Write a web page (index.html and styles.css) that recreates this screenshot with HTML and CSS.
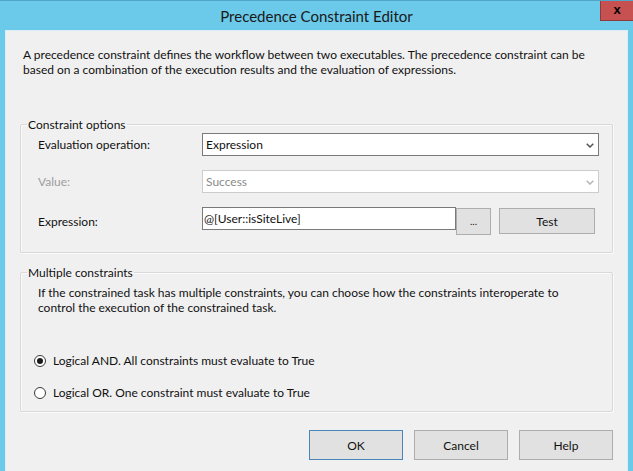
FILE: index.html
```html
<!DOCTYPE html>
<html lang="en">
<head>
<meta charset="utf-8">
<title>Precedence Constraint Editor</title>
<link rel="stylesheet" href="styles.css">
</head>
<body>
<div class="window">
  <div class="titlebar">
    <h1 class="title">Precedence Constraint Editor</h1>
    <button class="close" type="button">x</button>
  </div>
  <div class="content">
    <p class="desc">A precedence constraint defines the workflow between two executables. The precedence constraint can be<br>based on a combination of the execution results and the evaluation of expressions.</p>

    <fieldset class="group group-options">
      <legend>Constraint options</legend>
      <div class="form-grid">
        <label class="field-label">Evaluation operation:</label>
        <div class="combo">
          <span class="combo-text">Expression</span>
          <svg class="chevron" width="8" height="5" viewBox="0 0 8 5"><path d="M0.7 0.7 L4 4 L7.3 0.7" fill="none" stroke="#555" stroke-width="1.5"/></svg>
        </div>

        <label class="field-label field-label-disabled">Value:</label>
        <div class="combo combo-disabled">
          <span class="combo-text">Success</span>
          <svg class="chevron" width="8" height="5" viewBox="0 0 8 5"><path d="M0.7 0.7 L4 4 L7.3 0.7" fill="none" stroke="#b5b5b5" stroke-width="1.5"/></svg>
        </div>

        <label class="field-label">Expression:</label>
        <div class="expr-row">
          <div class="textbox">@[User::isSiteLive]</div>
          <button class="btn btn-ellipsis" type="button">...</button>
          <button class="btn btn-test" type="button">Test</button>
        </div>
      </div>
    </fieldset>

    <fieldset class="group group-multi">
      <legend>Multiple constraints</legend>
      <div class="multi-body">
        <p class="multi-text">If the constrained task has multiple constraints, you can choose how the constraints interoperate to<br>control the execution of the constrained task.</p>
        <div class="radio-list">
          <div class="radio"><span class="radio-dot checked"></span><span>Logical AND. All constraints must evaluate to True</span></div>
          <div class="radio"><span class="radio-dot"></span><span>Logical OR. One constraint must evaluate to True</span></div>
        </div>
      </div>
    </fieldset>

    <div class="actions">
      <button class="btn btn-dialog btn-default" type="button">OK</button>
      <button class="btn btn-dialog" type="button">Cancel</button>
      <button class="btn btn-dialog" type="button">Help</button>
    </div>
  </div>
</div>
</body>
</html>
```
FILE: styles.css
```css
* { box-sizing: border-box; }

body {
  margin: 0;
  font-family: Lato, "Liberation Sans", sans-serif;
  font-size: 12px;
  line-height: 15px;
  color: #111;
}

.window {
  width: 633px;
  height: 471px;
  background: #6bc9e9;
  border-top: 1px solid #4fa6c6;
  display: flex;
  flex-direction: column;
  overflow: hidden;
}

.titlebar {
  height: 29px;
  display: grid;
  grid-template-columns: 1fr auto 1fr;
  align-items: center;
}

.title {
  grid-column: 2;
  margin: 0;
  font-size: 15px;
  font-weight: normal;
  color: #1a1a1a;
  line-height: 18px;
}

.close {
  grid-column: 3;
  justify-self: end;
  align-self: start;
  margin-top: -1px;
  width: 33px;
  height: 21px;
  padding: 0 0 2px 0;
  background: #c75050;
  border: 1px solid #8e3b3b;
  border-top: 0;
  border-right: 0;
  font: bold 13px/1 "Liberation Sans", sans-serif;
  color: #000;
}

.content {
  flex: 1;
  margin: 0 5px;
  background: #f0f0f0;
  border: 1px solid #dbeef6;
  border-bottom: 0;
  padding: 16px 14px 0 14px;
  display: flex;
  flex-direction: column;
}

.desc {
  margin: 0 0 0 3px;
}

.group {
  margin: 0;
  padding: 0;
  border: 1px solid #d9d9d9;
  border-radius: 2px;
  box-shadow: inset 1px 1px 0 #fafafa, 1px 1px 0 #fafafa;
  min-width: 0;
}

.group legend {
  margin-left: 6px;
  padding: 0 1px;
  color: #111;
}

.group-options { margin-top: 40px; }

.form-grid {
  display: grid;
  grid-template-columns: 164px 1fr;
  row-gap: 14px;
  align-items: center;
  padding: 1px 13px 17px 17px;
}

.field-label { color: #111; }
.field-label-disabled { color: #9d9d9d; }

.combo {
  height: 23px;
  border: 1px solid #7a7a7a;
  background: #fff;
  display: flex;
  align-items: center;
  justify-content: space-between;
  padding: 0 4px 0 3px;
}

.combo-disabled {
  border-color: #cccccc;
}

.combo-disabled .combo-text { color: #8a8a8a; }

.chevron { display: block; margin-top: 1px; }

.expr-row {
  display: flex;
  align-items: flex-start;
}

.textbox {
  width: 254px;
  height: 23px;
  border: 1px solid #7a7a7a;
  background: #fff;
  padding: 3px 1px 0 1px;
}

.btn {
  background: #e1e1e1;
  border: 1px solid #adadad;
  font: inherit;
  color: #111;
  padding: 0;
}

.btn-ellipsis {
  width: 35px;
  height: 27px;
  margin-top: 1px;
  font-size: 10px;
}

.btn-test {
  width: 96px;
  height: 26px;
  margin-top: 1px;
  margin-left: 8px;
}

.group-multi { margin-top: 12px; }

.multi-body {
  padding: 5px 13px 11px 17px;
}

.multi-text { margin: 0; }

.radio-list {
  margin-top: 38px;
  margin-left: -4px;
  display: flex;
  flex-direction: column;
  gap: 17px;
}

.radio {
  display: flex;
  align-items: center;
  gap: 7px;
}

.radio-dot {
  width: 12px;
  height: 12px;
  border-radius: 50%;
  border: 1px solid #3a3a3a;
  background: #fff;
  display: flex;
  align-items: center;
  justify-content: center;
}

.radio-dot.checked::after {
  content: "";
  width: 6px;
  height: 6px;
  border-radius: 50%;
  background: #1a1a1a;
}

.actions {
  display: flex;
  justify-content: flex-end;
  gap: 11px;
  margin-top: 18px;
}

.btn-dialog {
  width: 94px;
  height: 30px;
}

.btn-default {
  border-color: #4a86ba;
}
```
